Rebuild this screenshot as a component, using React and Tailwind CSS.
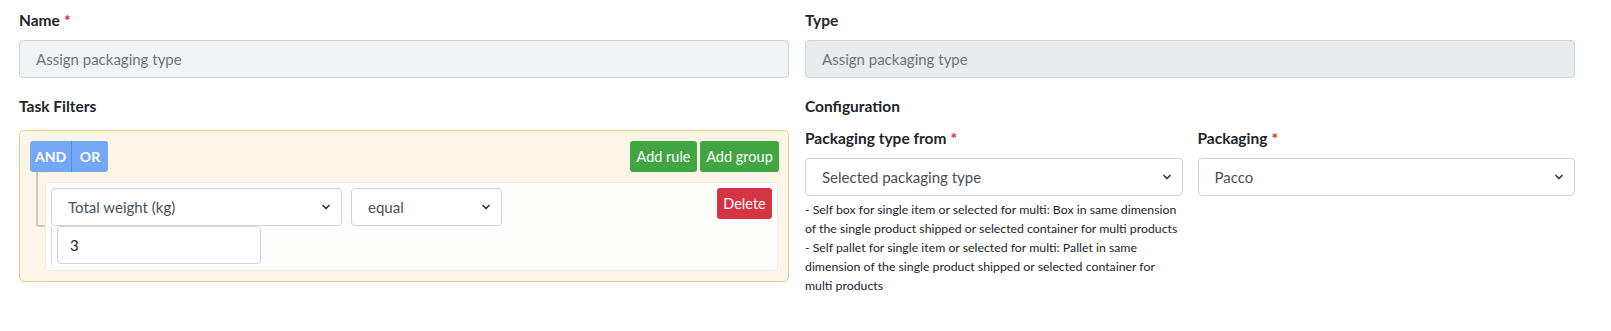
import { ChevronDown } from 'lucide-react';

const font = { fontFamily: 'Lato, "Noto Sans", sans-serif' };

function Label({ children, required }) {
    return (
        <div className="h-6 leading-6 mb-2 text-[15.5px] font-bold text-[#212529]">
            {children}
            {required && <span className="text-[#e3262f] ml-1">*</span>}
        </div>
    );
}

function Select({ value, className = '' }) {
    return (
        <div className={`relative h-[38px] ${className}`}>
            <select
                defaultValue={value}
                className="appearance-none w-full h-full bg-white border border-[#ced4da] rounded-[4px] pl-4 pr-8 text-[15px] text-[#495057] outline-none"
            >
                <option>{value}</option>
            </select>
            <ChevronDown className="absolute right-[10px] top-[13px] w-3 h-3 text-[#343a40] pointer-events-none" strokeWidth={3.5} />
        </div>
    );
}

const helpLines = [
    '- Self box for single item or selected for multi: Box in same dimension',
    'of the single product shipped or selected container for multi products',
    '- Self pallet for single item or selected for multi: Pallet in same',
    'dimension of the single product shipped or selected container for',
    'multi products',
];

export default function App() {
    return (
        <div style={font} className="bg-white w-[1611px] h-[331px] pl-[19px] pr-[36px] pt-2 grid grid-cols-2 gap-x-4 items-start">
            {/* Left column */}
            <div>
                <Label required>Name</Label>
                <input
                    placeholder="Assign packaging type"
                    className="w-full h-[38px] bg-[#f1f4f7] border border-[#ced4da] rounded-[4px] px-4 text-[15px] placeholder:text-[#6c757d] outline-none"
                />
                <div className="mt-4 mb-3 h-6 leading-6 text-[15.5px] font-bold text-[#212529]">Task Filters</div>

                {/* Query builder */}
                <div className="bg-[#fcf6e9] border border-[#e2cd92] rounded-[5px] pt-[10px] pl-[10px] pr-[9px] pb-[10px]">
                    <div className="flex justify-between">
                        <div className="flex h-[31px] rounded-[3px] overflow-hidden text-[14px] font-bold text-white">
                            <button className="w-[42px] bg-[#74a8f7] border-r border-[#4f8ff0]">AND</button>
                            <button className="w-[36px] bg-[#74a8f7]">OR</button>
                        </div>
                        <div className="flex gap-[3px] h-[31px] text-[14.5px] text-white">
                            <button className="w-[67px] bg-[#41a541] rounded-[3px]">Add rule</button>
                            <button className="w-[79px] bg-[#41a541] rounded-[3px]">Add group</button>
                        </div>
                    </div>

                    <div className="relative mt-[10px] ml-[15px] mr-[1px]">
                        {/* tree connector */}
                        <div className="absolute -left-[9px] -top-[10px] w-[9px] h-[55px] border-l-2 border-b-2 border-[#c8c8c8] rounded-bl-[3px]" />
                        <div className="bg-[#fffefc] border border-[#f1ede4] rounded-[3px] p-[5px] flex justify-between">
                            <div>
                                <div className="flex gap-[9px]">
                                    <Select value="Total weight (kg)" className="w-[291px]" />
                                    <Select value="equal" className="w-[151px]" />
                                </div>
                                <div className="border-l border-[#dcdcdc] pl-[5px] pb-[1px]">
                                    <input
                                        defaultValue="3"
                                        className="w-[204px] h-[38px] bg-white border border-[#ced4da] rounded-[4px] px-3 text-[15px] text-[#212529] outline-none"
                                    />
                                </div>
                            </div>
                            <button className="w-[55px] h-[31px] bg-[#d63343] rounded-[3px] text-[14.5px] text-white">Delete</button>
                        </div>
                    </div>
                </div>
            </div>

            {/* Right column */}
            <div>
                <Label>Type</Label>
                <input
                    disabled
                    placeholder="Assign packaging type"
                    className="w-full h-[38px] bg-[#e9ecef] border border-[#ced4da] rounded-[4px] px-4 text-[15px] placeholder:text-[#6c757d] outline-none"
                />
                <div className="mt-4 mb-2 h-6 leading-6 text-[15.5px] font-bold text-[#212529]">Configuration</div>
                <div className="grid grid-cols-2 gap-x-[15px]">
                    <div>
                        <Label required>Packaging type from</Label>
                        <Select value="Selected packaging type" />
                        <div className="mt-1 text-[12.3px] leading-[19px] text-[#212529] whitespace-nowrap">
                            {helpLines.map((line, i) => (
                                <div key={i}>{line}</div>
                            ))}
                        </div>
                    </div>
                    <div>
                        <Label required>Packaging</Label>
                        <Select value="Pacco" />
                    </div>
                </div>
            </div>
        </div>
    );
}
